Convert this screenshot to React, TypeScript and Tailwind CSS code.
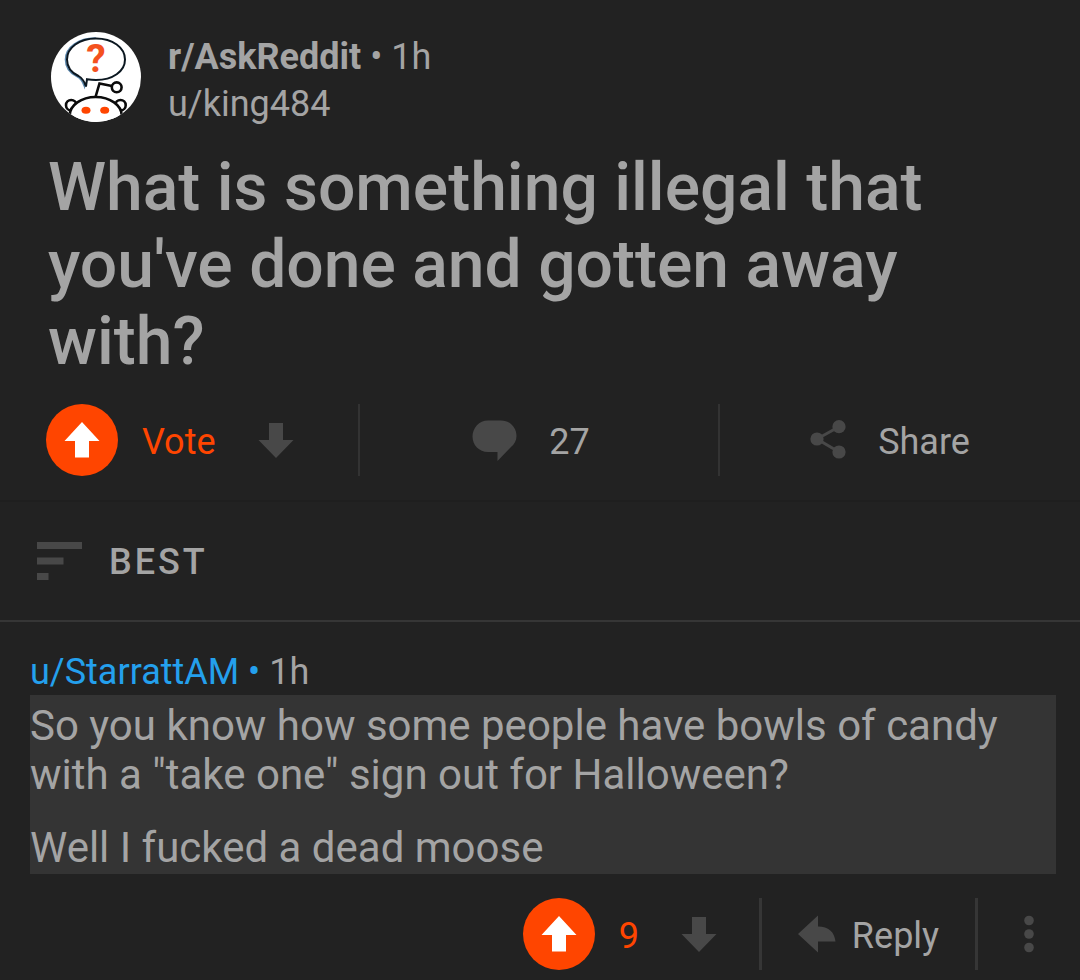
import React from "react";

function Avatar() {
  return (
    <svg viewBox="0 0 90 90" className="size-[90px] shrink-0 rounded-full bg-white" role="img" aria-label="AskReddit">
      <path
        d="M26 44.5C18.500 41 14.500 34.500 14.500 27.500C14.500 15 28 6 44 6L44 47.500L35 47L33.500 54.500C32 50.500 29.500 46 26 44.500Z"
        fill="none"
        stroke="#5b87ad"
        strokeWidth="1.6"
      />
      <path
        d="M27.5 44C20 40.5 16 34.5 16 27.5C16 15.5 28.500 6.500 45 6.500S74 15.500 74 27.500S61.500 48 45 48C42 48 38.800 47.700 36 47.200L35 54.500C33.500 50 31 46 27.500 44Z"
        fill="#fff"
        stroke="#0b1720"
        strokeWidth="2"
      />
      <text x="45" y="40" textAnchor="middle" fontFamily="Roboto, sans-serif" fontWeight="700" fontSize="39" fill="#f4511e">
        ?
      </text>
      <g fill="#fff" stroke="#0b0b0b" strokeWidth="2.6">
        <path d="M44.5 65L48.5 51.5L61 54" fill="none" />
        <circle cx="65.7" cy="55.3" r="4.9" />
        <circle cx="20.2" cy="73.2" r="5.2" />
        <circle cx="69.5" cy="73.2" r="5.2" />
        <ellipse cx="44.7" cy="83.5" rx="26" ry="18.5" />
      </g>
      <g fill="#ff4500">
        <ellipse cx="35" cy="78.3" rx="4.5" ry="3.5" />
        <ellipse cx="53.7" cy="78.3" rx="4.5" ry="3.5" />
      </g>
    </svg>
  );
}

function UpvoteButton() {
  return (
    <button type="button" aria-label="Upvote" className="flex size-[72px] shrink-0 items-center justify-center rounded-full bg-[#ff4500]">
      <svg viewBox="0 0 36 36" className="size-9 fill-white" aria-hidden="true">
        <path d="M18 0L35.5 19H25V35.5H11V19H.5Z" />
      </svg>
    </button>
  );
}

function DownvoteButton() {
  return (
    <button type="button" aria-label="Downvote" className="flex size-9 shrink-0 items-center justify-center">
      <svg viewBox="0 0 36 36" className="size-9 fill-[#484848]" aria-hidden="true">
        <path d="M18 36L35.5 18H25V1H11V18H.5Z" />
      </svg>
    </button>
  );
}

function Post() {
  return (
    <article className="border-b-2 border-[#1f1f1f] pt-8 pb-6">
      <header className="flex gap-[27px] px-[51px] text-4xl/[47px]">
        <Avatar />
        <div className="pt-0.5">
          <p>
            <a href="#subreddit" className="font-bold">r/AskReddit</a> • 1h
          </p>
          <p>
            <a href="#author">u/king484</a>
          </p>
        </div>
      </header>
      <h1 className="mt-[21px] px-12 text-[66px]/[77px] font-medium">
        What is something illegal that you've done and gotten away with?
      </h1>
      <div className="mt-6 grid grid-cols-3 divide-x-2 divide-[#333333] text-4xl">
        <div className="flex h-[72px] items-center pl-[46px]">
          <UpvoteButton />
          <span className="mr-[42px] ml-6 pt-1 text-[#ff4500]">Vote</span>
          <DownvoteButton />
        </div>
        <button type="button" aria-label="27 comments" className="flex items-center justify-center gap-8 pr-4">
          <svg viewBox="0 0 45 42" className="h-[42px] w-[45px] fill-[#484848]" aria-hidden="true">
            <path d="M16 1.500H29C38 1.500 44.500 8.500 44.500 17C44.500 21.500 42.500 25 39 28L25.500 42V33H16C7 33 .5 26 .5 17.500S7 1.500 16 1.500Z" />
          </svg>
          <span className="pt-1">27</span>
        </button>
        <button type="button" className="flex items-center justify-center gap-8 pr-5">
          <svg viewBox="0 0 36 40" className="h-10 w-9 fill-[#484848]" aria-hidden="true">
            <path d="M29 6.700L7 19L29 32" fill="none" stroke="#484848" strokeWidth="3" />
            <circle cx="7" cy="19" r="6.6" />
            <circle cx="29" cy="6.700" r="6.6" />
            <circle cx="29" cy="32" r="6.6" />
          </svg>
          <span className="pt-1">Share</span>
        </button>
      </div>
    </article>
  );
}

function SortBar() {
  return (
    <div className="border-b-2 border-[#363636]">
      <button type="button" className="flex h-[118px] items-center gap-[27px] pl-9 text-4xl font-medium">
        <svg viewBox="0 0 46 38" className="h-[38px] w-[46px] fill-[#484848]" aria-hidden="true">
          <path d="M1 0H46V7H1ZM1 15.5H27.5V22.5H1ZM1 31H12.5V38H1Z" />
        </svg>
        <span className="pt-0.5 tracking-[3px]">BEST</span>
      </button>
    </div>
  );
}

function Comment() {
  return (
    <article className="pt-7">
      <header className="px-[30px] text-4xl/[45px]">
        <span className="text-[#24a0ed]">
          <a href="#commenter">u/StarrattAM</a> •
        </span>{" "}
        1h
      </header>
      <div className="mr-6 ml-[30px] flex flex-col gap-6 bg-[#343434] pt-1.5 pb-0.5 text-[42px]/[49px]">
        <p>So you know how some people have bowls of candy with a "take one" sign out for Halloween?</p>
        <p>Well I fucked a dead moose</p>
      </div>
      <div className="mt-6 flex h-[72px] justify-end text-4xl">
        <div className="flex items-center pr-[42px]">
          <UpvoteButton />
          <span className="mr-[42px] ml-6 pt-1 text-[#ff4500]">9</span>
          <DownvoteButton />
        </div>
        <button type="button" className="flex w-[216px] items-center justify-center gap-4 border-l-[3px] border-[#363636]">
          <svg viewBox="0 0 38 38" className="size-[38px] fill-[#484848]" aria-hidden="true">
            <path d="M0 19L20 .5V11.5C30.500 11.5 36.500 17 37.500 26.5H20V37.5Z" />
          </svg>
          <span className="pt-1">Reply</span>
        </button>
        <button type="button" aria-label="More options" className="flex w-[105px] items-center justify-center border-l-[3px] border-[#363636]">
          <svg viewBox="0 0 10 38" className="h-[38px] w-2.5 fill-[#484848]" aria-hidden="true">
            <circle cx="5" cy="5.5" r="4.8" />
            <circle cx="5" cy="19" r="4.8" />
            <circle cx="5" cy="32.5" r="4.8" />
          </svg>
        </button>
      </div>
    </article>
  );
}

export default function App() {
  return (
    <main className="min-h-screen bg-[#222222] pb-2.5 font-['Roboto',sans-serif] text-[#a4a4a4]">
      <Post />
      <SortBar />
      <Comment />
    </main>
  );
}
